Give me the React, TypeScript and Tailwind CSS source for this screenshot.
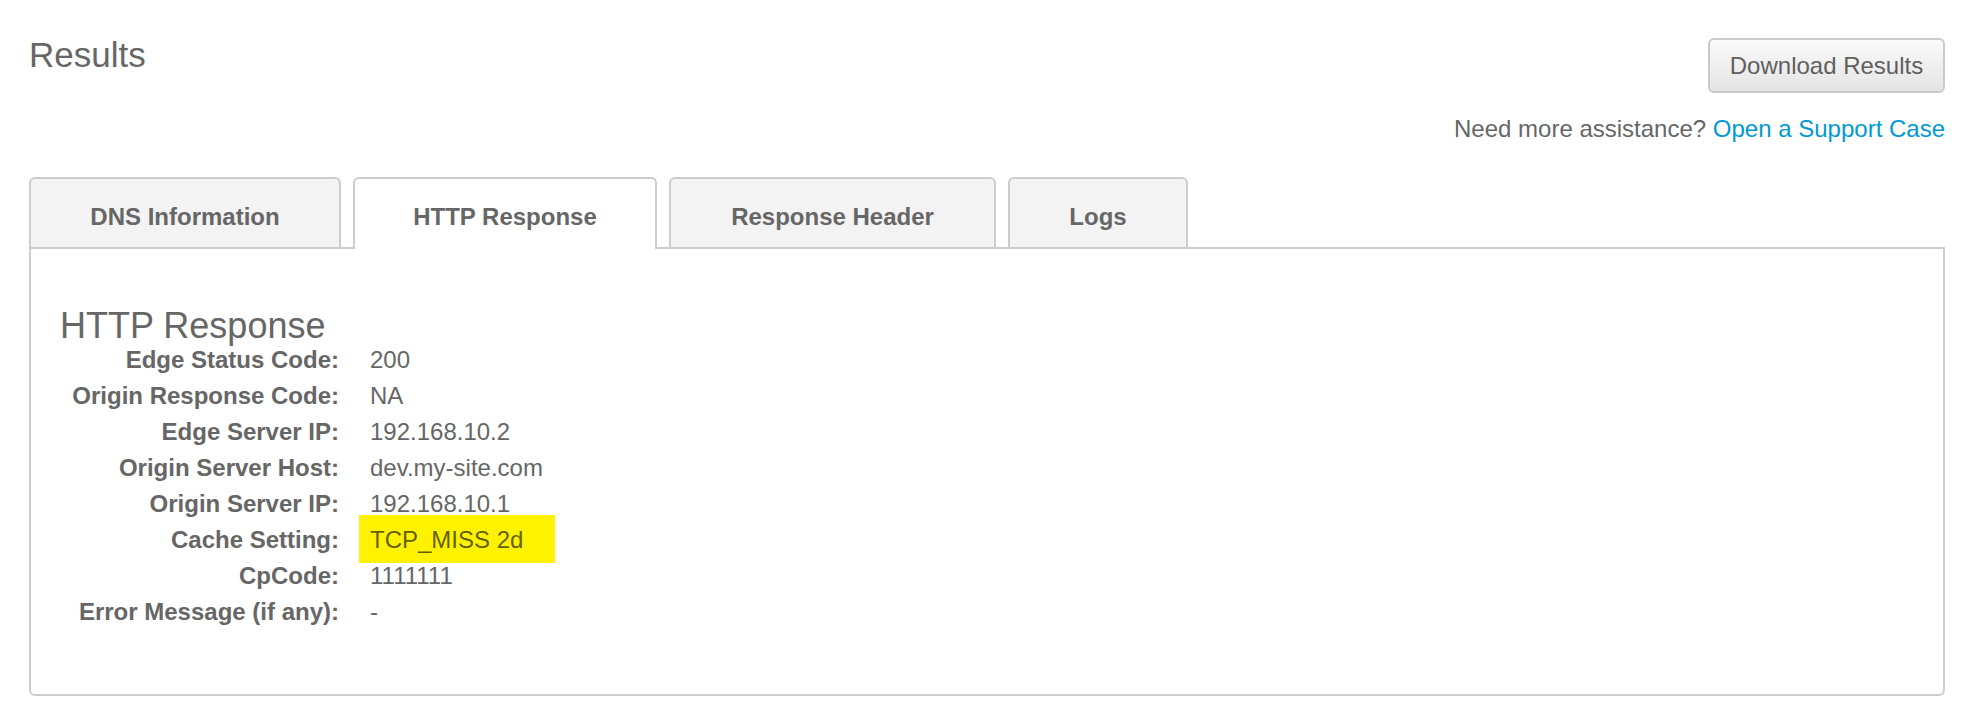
import React from "react";

const rows: { label: string; value: string; highlight?: boolean }[] = [
  { label: "Edge Status Code:", value: "200" },
  { label: "Origin Response Code:", value: "NA" },
  { label: "Edge Server IP:", value: "192.168.10.2" },
  { label: "Origin Server Host:", value: "dev.my-site.com" },
  { label: "Origin Server IP:", value: "192.168.10.1" },
  { label: "Cache Setting:", value: "TCP_MISS 2d", highlight: true },
  { label: "CpCode:", value: "1111111" },
  { label: "Error Message (if any):", value: "-" },
];

const tabs = [
  { name: "DNS Information", w: "w-[312px]" },
  { name: "HTTP Response", w: "w-[304px]", active: true },
  { name: "Response Header", w: "w-[327px]" },
  { name: "Logs", w: "w-[180px]" },
];

export default function App() {
  return (
    <div
      className="min-h-[722px] bg-white px-[29px] pt-[35px] text-[#666]"
      style={{ fontFamily: '"Liberation Sans", Arial, Helvetica, sans-serif' }}
    >
      <div className="flex items-start justify-between">
        <h1 className="text-[35px] leading-[40px] font-normal text-[#666]">Results</h1>
        <div className="mt-[3px] flex flex-col items-end">
          <button className="flex h-[55px] w-[237px] items-center justify-center rounded-[6px] border-2 border-[#c9c9c9] bg-gradient-to-b from-[#fbfbfb] to-[#e4e4e4] text-[24px] text-[#5f5f5f]">
            Download Results
          </button>
          <p className="mt-[22px] text-[24px] leading-[28px] text-[#666]">
            Need more assistance?{" "}
            <a className="text-[#0099d6]" href="#">
              Open a Support Case
            </a>
          </p>
        </div>
      </div>

      <div className="mt-[34px] flex items-end gap-[12px]">
        {tabs.map((t) =>
          t.active ? (
            <div
              key={t.name}
              className={`${t.w} relative z-10 -mb-[2px] flex h-[72px] items-center justify-center rounded-t-[6px] border-2 border-b-0 border-[#cccccc] bg-white pt-[6px] text-[24px] font-bold text-[#666]`}
            >
              {t.name}
            </div>
          ) : (
            <div
              key={t.name}
              className={`${t.w} flex h-[70px] items-center justify-center rounded-t-[6px] border-2 border-b-0 border-[#cccccc] bg-[#f3f3f3] pt-[8px] text-[24px] font-bold text-[#666]`}
            >
              {t.name}
            </div>
          )
        )}
      </div>

      <div className="h-[449px] rounded-b-[6px] border-2 border-[#cccccc] px-[29px] pt-[58px]">
        <h2 className="text-[36px] leading-[38px] font-normal text-[#666]">HTTP Response</h2>
        <div className="-mt-[3px] grid grid-cols-[279px_1fr] gap-x-[31px] text-[24px] leading-[36px]">
          {rows.map((r) => (
            <React.Fragment key={r.label}>
              <div className="text-right font-bold text-[#666]">{r.label}</div>
              <div className="text-[#666]">
                {r.highlight ? (
                  <span className="ml-[-11px] bg-[#fff200] pt-[11px] pr-[32px] pb-[10px] pl-[11px] text-[#666100]">
                    {r.value}
                  </span>
                ) : (
                  r.value
                )}
              </div>
            </React.Fragment>
          ))}
        </div>
      </div>
    </div>
  );
}
